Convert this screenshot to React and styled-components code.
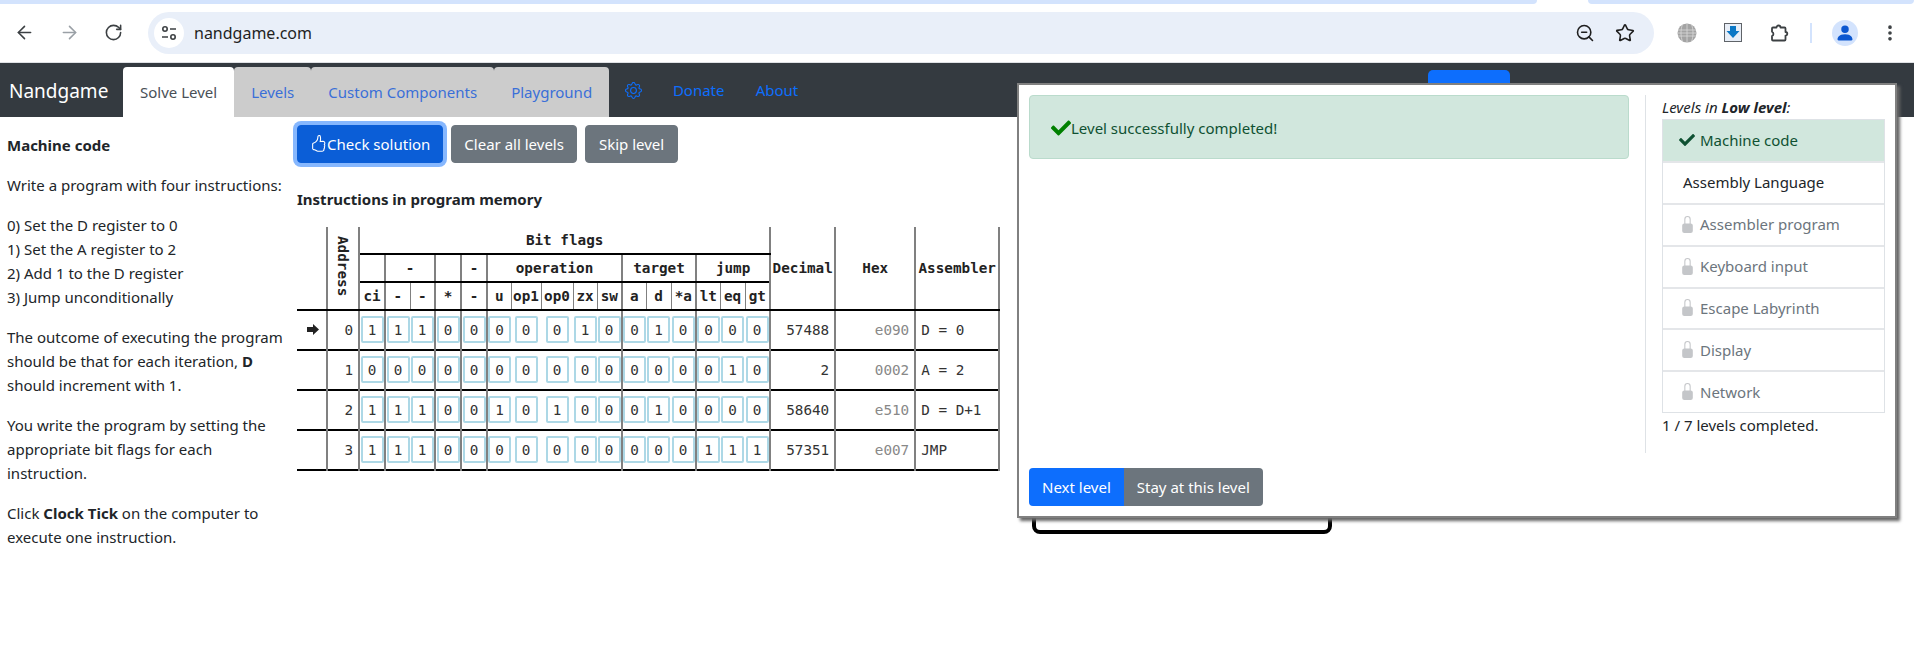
import React from "react"
import styled, { createGlobalStyle } from "styled-components"
import { ArrowLeft, ArrowRight, RotateCw, ZoomOut, Star, MoreVertical } from "lucide-react"
import { BsHandThumbsUp, BsGear, BsLockFill, BsPersonFill } from "react-icons/bs"
import { FaCheck } from "react-icons/fa"

const SANS = `"Noto Sans", "Open Sans", sans-serif`
const MONO = `"DejaVu Sans Mono", "Liberation Mono", monospace`

const GlobalStyle = createGlobalStyle`
  html, body { margin: 0; padding: 0; background: #fff; overflow: hidden; }
  body { font-family: ${SANS}; font-size: 15px; line-height: 24px; color: #212529; }
  * { box-sizing: border-box; }
`

const Page = styled.div`
  position: relative;
  width: 1914px;
  height: 667px;
  overflow: hidden;
`

/* browser chrome */
const TabStrip = styled.div`
  height: 4px;
  display: flex;
  justify-content: space-between;
`
const StripPiece = styled.div`
  width: ${(p) => p.$w}px;
  background: #d3e3fd;
  border-radius: ${(p) => p.$radius};
`
const Toolbar = styled.div`
  height: 59px;
  display: flex;
  align-items: center;
  padding: 0 0 1px 14px;
  border-bottom: 1px solid #dfe1e5;
  color: #3c4043;
`
const NavIcon = styled.span`
  width: 45px;
  display: flex;
  color: ${(p) => (p.$off ? "#9aa0a6" : "#3c4043")};
`
const Omnibox = styled.div`
  width: 1506px;
  height: 42px;
  margin-left: -1px;
  border-radius: 21px;
  background: #e9eff9;
  display: flex;
  align-items: center;
  padding: 0 19px 0 6px;
  font-size: 16px;
  color: #1f1f1f;
`
const SiteBadge = styled.span`
  width: 30px;
  height: 30px;
  border-radius: 50%;
  background: #fff;
  display: flex;
  align-items: center;
  justify-content: center;
  margin-right: 10px;
`
const OmniActions = styled.div`
  margin-left: auto;
  display: flex;
  gap: 20px;
`
const ExtensionRow = styled.div`
  display: flex;
  align-items: center;
  margin-left: 10px;
`
const Extension = styled.span`
  width: 46px;
  display: flex;
  justify-content: center;
`
const Divider = styled.span`
  width: 2px;
  height: 20px;
  background: #d3e3fd;
  margin: 0 20px 0 8px;
`
const Avatar = styled.span`
  width: 26px;
  height: 26px;
  border-radius: 50%;
  background: #d3e3fd;
  color: #0b57d0;
  display: flex;
  align-items: center;
  justify-content: center;
  margin-right: 22px;
`

/* site navbar */
const Navbar = styled.nav`
  height: 54px;
  background: #343a40;
  display: flex;
  align-items: flex-end;
`
const Brand = styled.div`
  width: 123px;
  align-self: center;
  padding-left: 9px;
  font-size: 19px;
  color: #fff;
  margin-top: 1px;
`
const Tab = styled.div`
  height: 50px;
  padding: 0 17px;
  display: flex;
  align-items: center;
  border-radius: 4px 4px 0 0;
  background: ${(p) => (p.$active ? "#fff" : "#ccc")};
  color: ${(p) => (p.$active ? "#495057" : "#3a6fd8")};
`
const NavLink = styled.div`
  height: 50px;
  padding: 0 15.6px 4px;
  display: flex;
  align-items: center;
  color: #0d6efd;
`
const HiddenButton = styled.div`
  width: 82px;
  height: 47px;
  margin-left: auto;
  margin-right: 404px;
  border-radius: 5px 5px 0 0;
  background: #0d6efd;
`

/* page body */
const Main = styled.main`
  display: flex;
`
const Intro = styled.aside`
  width: 297px;
  padding: 15.5px 14px 0 7px;
  p { margin: 0 0 16px; }
`
const Heading = styled.div`
  font-weight: 700;
  margin-bottom: 16px;
`
const Workspace = styled.section`
  flex: 1;
  padding-top: 7.5px;
`
const ButtonRow = styled.div`
  display: flex;
  gap: 8px;
  margin-bottom: 24px;
`
const Button = styled.button`
  height: 38px;
  padding: 0 ${(p) => p.$pad || 12}px;
  border: 1px solid ${(p) => p.$bg};
  border-radius: 4px;
  background: ${(p) => p.$bg};
  color: #fff;
  font: inherit;
  display: flex;
  align-items: center;
  white-space: nowrap;
  box-shadow: ${(p) => (p.$focus ? "0 0 0 4px #86b7fe" : "none")};
`
const SubHeading = styled.div`
  font-weight: 700;
  margin-bottom: 16px;
`

/* instruction table */
const Table = styled.table`
  table-layout: fixed;
  width: 702px;
  border-collapse: collapse;
  font-family: ${MONO};
  font-size: 14.3px;
  line-height: 16px;
`
const HeadCell = styled.th`
  padding: 0;
  text-align: center;
  font-weight: 700;
  color: #222;
  border-left: 2px solid #808080;
  border-right: 2px solid #808080;
  border-bottom: 2px solid #000;
  height: ${(p) => p.$h || 27}px;
`
const SubCell = styled.th`
  padding: 0;
  text-align: center;
  font-weight: 700;
  color: #222;
  height: 28px;
  border-right: ${(p) => (p.$end ? "2px" : "1px")} solid #808080;
  border-bottom: 2px solid #000;
`
const Corner = styled.th`
  border-bottom: 2px solid #000;
`
const AddressLabel = styled.span`
  writing-mode: vertical-rl;
  display: inline-block;
`
const Row = styled.tr`
  height: 40px;
  border-bottom: 2px solid #000;
`
const PointerCell = styled.td`
  padding: 0 0 0 10px;
`
const NumCell = styled.td`
  padding: 0 5px 0 0;
  text-align: right;
  color: ${(p) => p.$color || "#333"};
  border-left: 2px solid #808080;
  border-right: 2px solid #808080;
`
const AsmCell = styled.td`
  padding: 0 0 0 5px;
  color: #333;
  white-space: nowrap;
  border-left: 2px solid #808080;
  border-right: 2px solid #808080;
`
const BitCell = styled.td`
  padding: 0;
  border-right: ${(p) => (p.$end ? "2px solid #808080" : "none")};
`
const BitBox = styled.div`
  width: 23px;
  height: 27px;
  margin: 0 auto;
  border: 2px solid #add8e6;
  border-radius: 2px;
  display: flex;
  align-items: center;
  justify-content: center;
  color: #333;
`

/* level complete dialog */
const Backdrop = styled.div`
  position: absolute;
  left: 1032px;
  top: 480px;
  width: 300px;
  height: 54px;
  border: 4px solid #000;
  border-radius: 8px;
`
const Dialog = styled.div`
  position: absolute;
  left: 1017px;
  top: 83px;
  width: 880px;
  height: 435px;
  padding: 10px 10px 9px;
  background: #fff;
  border: 2px solid #808080;
  box-shadow: 3px 3px 3px #666;
  display: flex;
  flex-direction: column;
`
const DialogBody = styled.div`
  display: flex;
  height: 358px;
`
const DialogMain = styled.div`
  width: 617px;
`
const Alert = styled.div`
  width: 600px;
  height: 63.5px;
  padding: 3px 0 0 21px;
  display: flex;
  align-items: center;
  border: 1px solid #badbcc;
  border-radius: 4px;
  background: #d1e7dd;
  color: #0f5132;
`
const Sidebar = styled.div`
  flex: 1;
  border-left: 1px solid #dee2e6;
  padding-left: 16px;
`
const SidebarTitle = styled.div`
  height: 24px;
  font-style: italic;
  b { font-weight: 700; }
`
const LevelList = styled.div`
  width: 223px;
  border: 1px solid #dee2e6;
`
const Level = styled.div`
  height: ${(p) => (p.$done ? "41px" : "41.85px")};
  display: flex;
  align-items: center;
  padding-left: ${(p) => (p.$open ? 20 : 16)}px;
  padding-bottom: 1px;
  background: ${(p) => (p.$done ? "#d1e7dd" : "#fff")};
  color: ${(p) => (p.$done ? "#0f5132" : p.$open ? "#212529" : "#6c757d")};
  border-top: ${(p) => (p.$first ? "none" : "2px solid #e4e6e9")};
`
const LevelIcon = styled.span`
  width: 21px;
  display: flex;
  color: ${(p) => p.$color};
`
const Progress = styled.div`
  margin-top: 0;
`
const ButtonGroup = styled.div`
  display: flex;
  width: 234px;
  margin-top: auto;
  margin-bottom: 1px;
`
const GroupButton = styled.div`
  height: 38px;
  padding: 0 13px;
  display: flex;
  align-items: center;
  color: #fff;
  white-space: nowrap;
  background: ${(p) => p.$bg};
  border-radius: ${(p) => p.$radius};
`

const INSTRUCTIONS = [
  { dec: 57488, hex: "e090", asm: "D = 0" },
  { dec: 2, hex: "0002", asm: "A = 2" },
  { dec: 58640, hex: "e510", asm: "D = D+1" },
  { dec: 57351, hex: "e007", asm: "JMP" },
]
const FLAGS = ["ci", "-", "-", "*", "-", "u", "op1", "op0", "zx", "sw", "a", "d", "*a", "lt", "eq", "gt"]
const GROUP_ENDS = [0, 2, 3, 4, 9, 12, 15]
const COLS = [30, 32, 26, 25, 25, 26, 26, 24, 30, 32, 24, 25, 24, 25, 25, 24, 25, 25, 65, 80, 84]

const LEVELS = ["Assembler program", "Keyboard input", "Escape Labyrinth", "Display", "Network"]

const SiteIcon = () => (
  <svg width="18" height="18" viewBox="0 0 18 18" fill="none" stroke="#3c4043" strokeWidth="1.6">
    <circle cx="5" cy="5" r="2.2" />
    <path d="M10 5h6M2 13h6" />
    <circle cx="13" cy="13" r="2.2" />
  </svg>
)

const GlobeIcon = () => (
  <svg width="20" height="20" viewBox="0 0 20 20" fill="#a3a3a3" stroke="#d9d9d9" strokeWidth="0.8">
    <circle cx="10" cy="10" r="9.5" stroke="none" />
    <path d="M1 7h18M1 10h18M1 13h18M10 0v20M5.5 1.5c-2 5-2 12 0 17M14.5 1.5c2 5 2 12 0 17" fill="none" />
  </svg>
)

const DownloadIcon = () => (
  <svg width="18" height="19" viewBox="0 0 18 19">
    <rect x="0.5" y="0.5" width="17" height="18" fill="#e8eef7" stroke="#5f6368" />
    <path d="M6 3h6v5h3.5L9 15 2.5 8H6z" fill="#0b77c5" />
  </svg>
)

const ExtensionIcon = () => (
  <svg width="20" height="20" viewBox="0 0 20 20" fill="none" stroke="#3c4043" strokeWidth="1.8" strokeLinejoin="round">
    <path d="M7.5 4.5a2 2 0 0 1 4 0h4a1 1 0 0 1 1 1v3.5a1.8 1.8 0 0 1 0 3.6v3.9a1 1 0 0 1-1 1H4a1 1 0 0 1-1-1v-3.4a2.4 2.4 0 0 0 0-4.4V5.5a1 1 0 0 1 1-1z" />
  </svg>
)

const PointerIcon = () => (
  <svg width="12" height="11" viewBox="0 0 12 11" fill="#222">
    <path d="M0 3h6V0l6 5.5L6 11V8H0z" />
  </svg>
)

const App = () => (
  <Page>
    <GlobalStyle />
    <TabStrip>
      <StripPiece $w={1537} $radius="0 0 10px 0" />
      <StripPiece $w={326} $radius="0 0 10px 10px" />
    </TabStrip>
    <Toolbar>
      <NavIcon><ArrowLeft size={21} strokeWidth={1.8} /></NavIcon>
      <NavIcon $off><ArrowRight size={21} strokeWidth={1.8} /></NavIcon>
      <NavIcon><RotateCw size={19} strokeWidth={2} /></NavIcon>
      <Omnibox>
        <SiteBadge><SiteIcon /></SiteBadge>
        nandgame.com
        <OmniActions>
          <ZoomOut size={20} strokeWidth={1.9} />
          <Star size={20} strokeWidth={1.9} />
        </OmniActions>
      </Omnibox>
      <ExtensionRow>
        <Extension><GlobeIcon /></Extension>
        <Extension><DownloadIcon /></Extension>
        <Extension><ExtensionIcon /></Extension>
        <Divider />
        <Avatar><BsPersonFill size={20} /></Avatar>
        <MoreVertical size={20} strokeWidth={2.4} />
      </ExtensionRow>
    </Toolbar>

    <Navbar>
      <Brand>Nandgame</Brand>
      <Tab $active>Solve Level</Tab>
      <Tab>Levels</Tab>
      <Tab>Custom Components</Tab>
      <Tab>Playground</Tab>
      <NavLink><BsGear size={17} /></NavLink>
      <NavLink>Donate</NavLink>
      <NavLink>About</NavLink>
      <HiddenButton />
    </Navbar>

    <Main>
      <Intro>
        <Heading>Machine code</Heading>
        <p>Write a program with four instructions:</p>
        <p>
          0) Set the D register to 0<br />
          1) Set the A register to 2<br />
          2) Add 1 to the D register<br />
          3) Jump unconditionally
        </p>
        <p>The outcome of executing the program should be that for each iteration, <b>D</b> should increment with 1.</p>
        <p>You write the program by setting the appropriate bit flags for each instruction.</p>
        <p>Click <b>Clock Tick</b> on the computer to execute one instruction.</p>
      </Intro>

      <Workspace>
        <ButtonRow>
          <Button $bg="#0b5ed7" $focus><BsHandThumbsUp size={17} />Check solution</Button>
          <Button $bg="#6c757d">Clear all levels</Button>
          <Button $bg="#6c757d" $pad={13}>Skip level</Button>
        </ButtonRow>
        <SubHeading>Instructions in program memory</SubHeading>
        <Table>
          <colgroup>
            {COLS.map((w, i) => <col key={i} width={w} />)}
          </colgroup>
          <thead>
            <tr>
              <Corner rowSpan={3} />
              <HeadCell rowSpan={3}><AddressLabel>Address</AddressLabel></HeadCell>
              <HeadCell colSpan={16}>Bit flags</HeadCell>
              <HeadCell rowSpan={3}>Decimal</HeadCell>
              <HeadCell rowSpan={3}>Hex</HeadCell>
              <HeadCell rowSpan={3}>Assembler</HeadCell>
            </tr>
            <tr>
              <HeadCell $h={28} />
              <HeadCell $h={28} colSpan={2}>-</HeadCell>
              <HeadCell $h={28} />
              <HeadCell $h={28}>-</HeadCell>
              <HeadCell $h={28} colSpan={5}>operation</HeadCell>
              <HeadCell $h={28} colSpan={3}>target</HeadCell>
              <HeadCell $h={28} colSpan={3}>jump</HeadCell>
            </tr>
            <tr>
              {FLAGS.map((f, i) => <SubCell key={i} $end={GROUP_ENDS.includes(i)}>{f}</SubCell>)}
            </tr>
          </thead>
          <tbody>
            {INSTRUCTIONS.map((ins, row) => (
              <Row key={row}>
                <PointerCell>{row === 0 && <PointerIcon />}</PointerCell>
                <NumCell>{row}</NumCell>
                {ins.dec.toString(2).padStart(16, "0").split("").map((bit, i) => (
                  <BitCell key={i} $end={GROUP_ENDS.includes(i)}><BitBox>{bit}</BitBox></BitCell>
                ))}
                <NumCell>{ins.dec}</NumCell>
                <NumCell $color="#888">{ins.hex}</NumCell>
                <AsmCell>{ins.asm}</AsmCell>
              </Row>
            ))}
          </tbody>
        </Table>
      </Workspace>
    </Main>

    <Backdrop />
    <Dialog>
      <DialogBody>
        <DialogMain>
          <Alert>
            <FaCheck size={20} color="#008000" />
            Level successfully completed!
          </Alert>
        </DialogMain>
        <Sidebar>
          <SidebarTitle>Levels in <b>Low level</b>:</SidebarTitle>
          <LevelList>
            <Level $done $first>
              <LevelIcon $color="#0f5132"><FaCheck size={16} /></LevelIcon>
              Machine code
            </Level>
            <Level $open>Assembly Language</Level>
            {LEVELS.map((name) => (
              <Level key={name}>
                <LevelIcon $color="#c4c6c9"><BsLockFill size={17} /></LevelIcon>
                {name}
              </Level>
            ))}
          </LevelList>
          <Progress>1 / 7 levels completed.</Progress>
        </Sidebar>
      </DialogBody>
      <ButtonGroup>
        <GroupButton $bg="#0d6efd" $radius="4px 0 0 4px">Next level</GroupButton>
        <GroupButton $bg="#6c757d" $radius="0 4px 4px 0">Stay at this level</GroupButton>
      </ButtonGroup>
    </Dialog>
  </Page>
)

export default App
